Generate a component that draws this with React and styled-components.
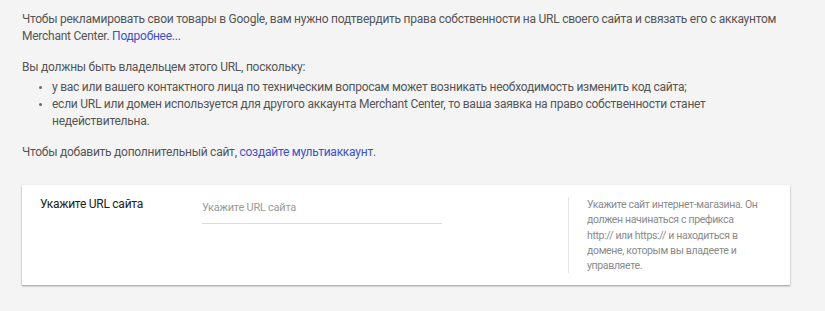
import React from "react";
import styled, { createGlobalStyle } from "styled-components";

const Global = createGlobalStyle`
  html, body { margin: 0; padding: 0; background: #f4f4f4; }
  body { font-family: Roboto, "Liberation Sans", Arial, sans-serif; }
`;

const Page = styled.div`
  width: 825px;
  height: 311px;
  box-sizing: border-box;
  padding: 11px 35px 0 22px;
  background: #f4f4f4;
  color: #555;
  font-size: 12px;
  letter-spacing: -0.25px;
  line-height: 17px;
`;

const Para = styled.p`
  margin: 0 0 ${(p) => p.$gap ?? 14}px 0;
`;

const Link = styled.a`
  color: #4051c6;
  text-decoration: none;
`;

const List = styled.ul`
  margin: 3px 0 14px 0;
  padding: 0 0 0 30px;
  list-style: disc;
  li { margin: 0; }
  li::marker { font-size: 10px; color: #666; }
`;

const Card = styled.div`
  margin-top: 24px;
  width: 768px;
  height: 100px;
  box-sizing: border-box;
  background: #fff;
  box-shadow: 0 1px 2px rgba(0, 0, 0, 0.32), 0 1px 1px rgba(0, 0, 0, 0.08);
  display: flex;
  align-items: flex-start;
  padding: 12px 0 0 18px;
`;

const Label = styled.div`
  width: 162px;
  font-size: 12px;
  line-height: 14px;
  color: #222;
`;

const Field = styled.div`
  width: 240px;
  margin-top: 3px;
  border-bottom: 1px solid #dcdcdc;
  padding-bottom: 7px;
  font-size: 11px;
  line-height: 16px;
  color: #9a9a9a;
`;

const Help = styled.div`
  margin-left: 126px;
  border-left: 1px solid #e6e6e6;
  padding: 0 0 0 18px;
  width: 190px;
  font-size: 10.5px;
  letter-spacing: -0.35px;
  line-height: 15.3px;
  color: #8a8a8a;
`;

export default function App() {
  return (
    <>
      <Global />
      <Page>
        <Para>
          Чтобы рекламировать свои товары в Google, вам нужно подтвердить права собственности на URL своего сайта и связать его с аккаунтом Merchant Center.{" "}
          <Link href="#">Подробнее...</Link>
        </Para>
        <Para $gap={0}>Вы должны быть владельцем этого URL, поскольку:</Para>
        <List>
          <li>у вас или вашего контактного лица по техническим вопросам может возникать необходимость изменить код сайта;</li>
          <li>если URL или домен используется для другого аккаунта Merchant Center, то ваша заявка на право собственности станет недействительна.</li>
        </List>
        <Para $gap={0}>
          Чтобы добавить дополнительный сайт, <Link href="#">создайте мультиаккаунт</Link>.
        </Para>
        <Card>
          <Label>Укажите URL сайта</Label>
          <Field>Укажите URL сайта</Field>
          <Help>
            Укажите сайт интернет-магазина. Он
            <br />
            должен начинаться с префикса
            <br />
            http:// или https:// и находиться в
            <br />
            домене, которым вы владеете и
            <br />
            управляете.
          </Help>
        </Card>
      </Page>
    </>
  );
}
